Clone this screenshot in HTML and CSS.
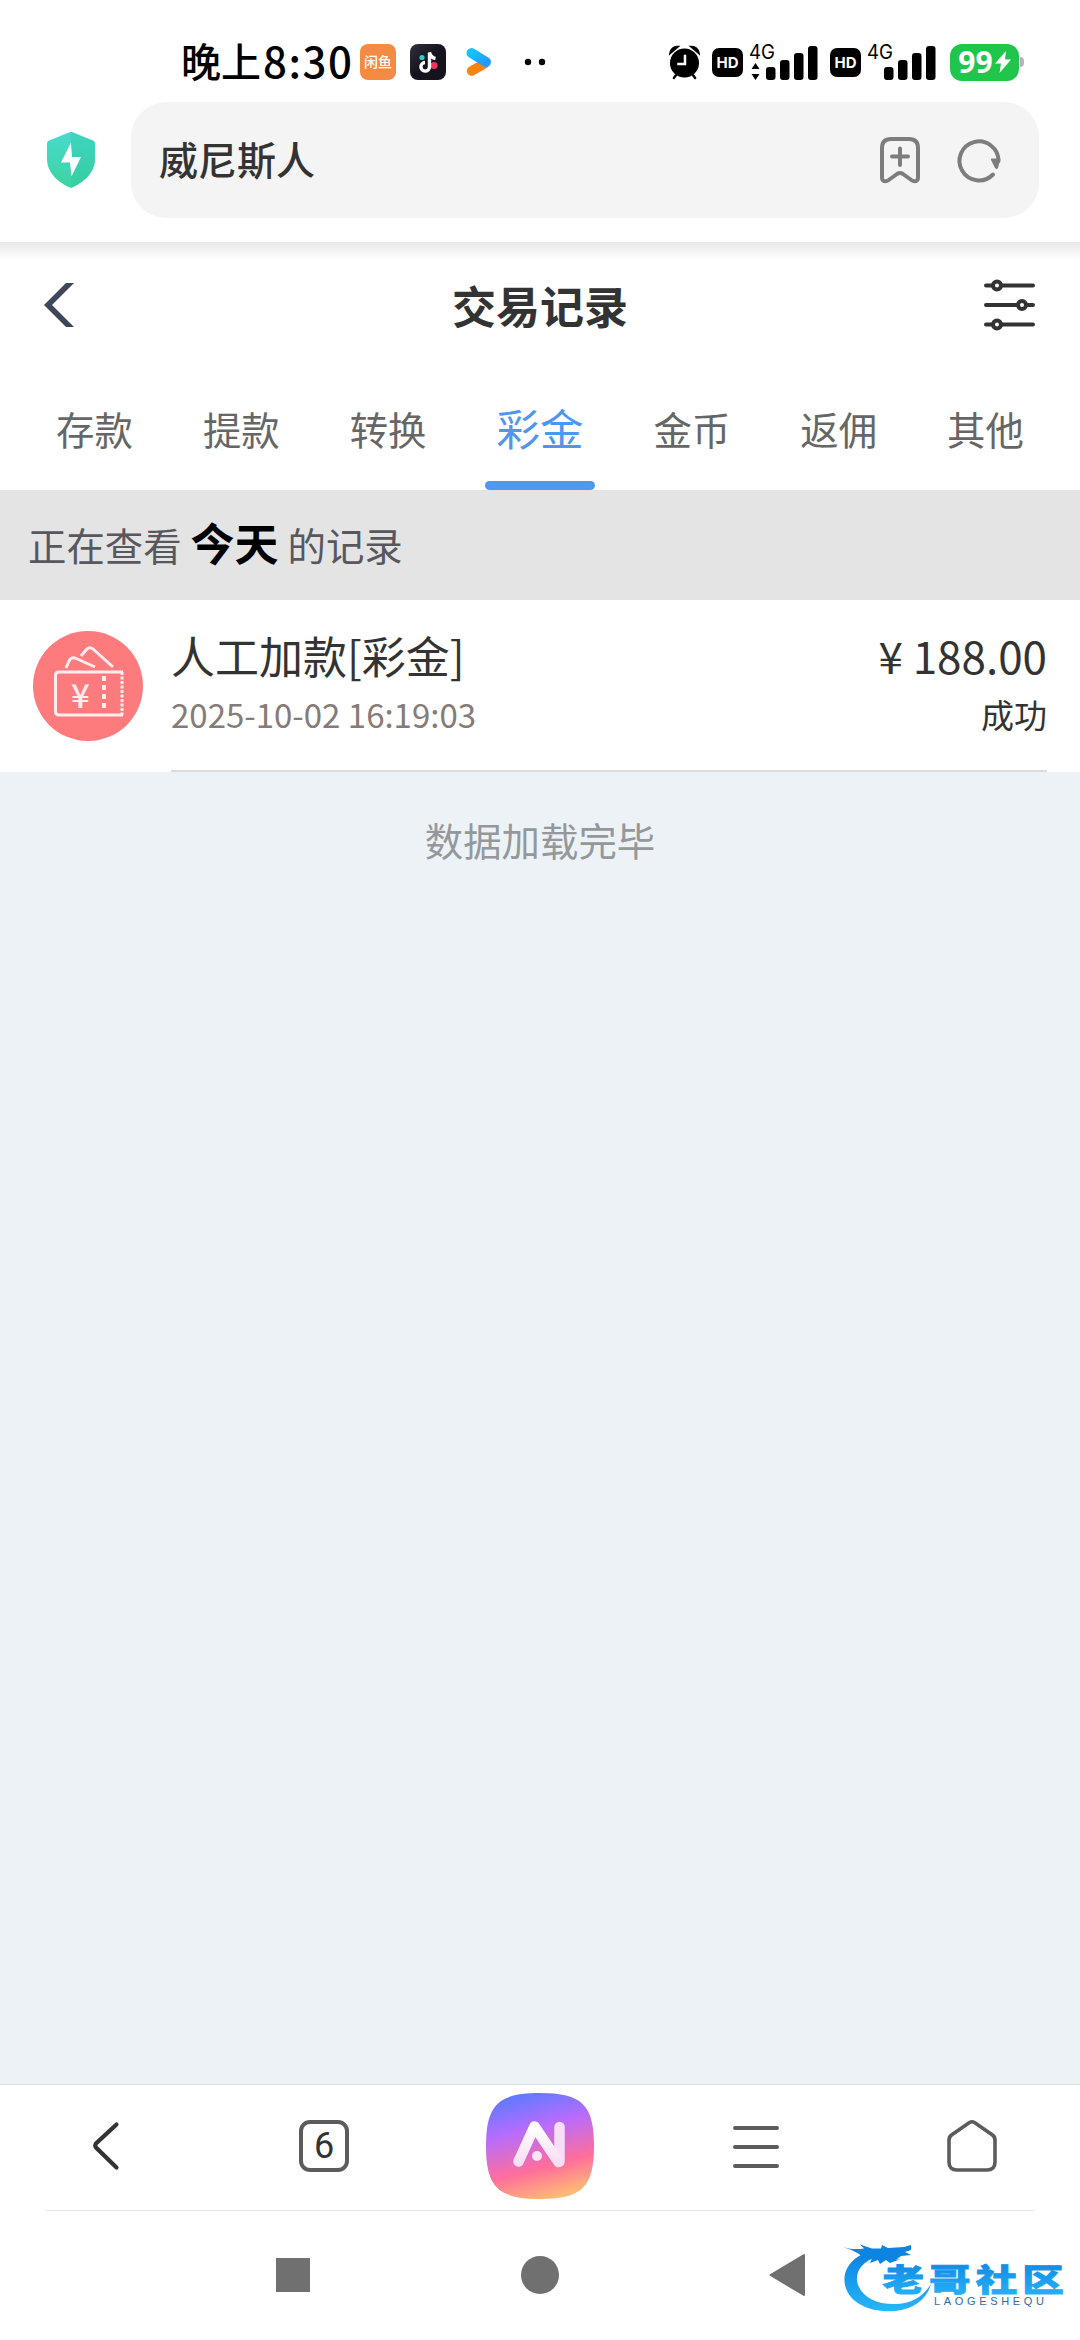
FILE: index.html
```html
<!DOCTYPE html>
<html lang="zh-CN">
<head>
<meta charset="utf-8">
<title>交易记录</title>
<link rel="stylesheet" href="styles.css">
</head>
<body>
<header class="browser">
  <div class="status">
    <span class="clock">晚上<span class="clock-digits">8:30</span></span>
    <span class="app app-fish">闲鱼</span>
    <svg class="app app-note" viewBox="0 0 36 36">
      <defs><linearGradient id="dark" x1="0" y1="0" x2="1" y2="1"><stop offset="0" stop-color="#332e3c"/><stop offset=".5" stop-color="#15131d"/><stop offset="1" stop-color="#15131d"/></linearGradient></defs>
      <rect width="36" height="36" rx="8" fill="url(#dark)"/>
      <circle cx="12" cy="13.500" r="2.600" fill="#2bd0c4"/><circle cx="24" cy="21.500" r="3.600" fill="#f2345c"/>
      <path d="M15 18.500a4.300 4.300 0 1 0 4.500 4.500V8.500c1 3.500 3 5.500 6 6" fill="none" stroke="#fff" stroke-width="3.400"/>
    </svg>
    <svg class="app-arrow" viewBox="0 0 26 30">
      <defs><linearGradient id="sky" x1="0" y1="0" x2="1" y2="1"><stop offset="0" stop-color="#13c4fb"/><stop offset="1" stop-color="#229bff"/></linearGradient></defs>
      <path d="M5.500 24L18 17" stroke="#fb8410" stroke-width="9.500" stroke-linecap="round"/>
      <path d="M5.500 6L20 15" stroke="url(#sky)" stroke-width="10" stroke-linecap="round"/>
    </svg>
    <svg class="more" viewBox="0 0 22 8"><circle cx="4" cy="4" r="3.200"/><circle cx="18" cy="4" r="3.200"/></svg>
    <svg class="alarm" viewBox="0 0 32 36">
      <path d="M1.500 8a7 7 0 0 1 7-6zM30.500 8a7 7 0 0 0-7-6zM8 30l-3 4M24 30l3 4" stroke="#000" stroke-width="2.500" stroke-linecap="round"/>
      <circle cx="16" cy="18.500" r="15"/>
      <path d="M16.500 10v9.500H8.500" fill="none" stroke="#fff" stroke-width="2.600"/>
    </svg>
    <span class="hd">HD</span>
    <svg class="signal" viewBox="0 0 70 38">
      <text class="net" x="0" y="15.500" textLength="26" lengthAdjust="spacingAndGlyphs">4G</text>
      <path d="M6.500 20l4 6h-8zM6.500 37l4-6h-8z"/>
      <rect x="17" y="24" width="9.500" height="13" rx="3"/><rect x="31" y="17" width="9.500" height="20" rx="3"/><rect x="45" y="10" width="9.500" height="27" rx="3"/><rect x="59" y="3" width="9.500" height="34" rx="3"/>
    </svg>
    <span class="hd hd-second">HD</span>
    <svg class="signal" viewBox="0 0 70 38">
      <text class="net" x="0" y="15.500" textLength="26" lengthAdjust="spacingAndGlyphs">4G</text>
      <rect x="17" y="24" width="9.500" height="13" rx="3"/><rect x="31" y="17" width="9.500" height="20" rx="3"/><rect x="45" y="10" width="9.500" height="27" rx="3"/><rect x="59" y="3" width="9.500" height="34" rx="3"/>
    </svg>
    <span class="battery">99<svg viewBox="0 0 16 22"><path d="M11 0L0 12.500h6L4.500 22 16 8.500h-6z" fill="#fff"/></svg></span>
    <i class="nub"></i>
  </div>
  <div class="address">
    <svg class="shield" viewBox="0 0 48 56">
      <defs><linearGradient id="mint" x1="0" y1="0" x2="0" y2="1"><stop offset="0" stop-color="#48dacd"/><stop offset="1" stop-color="#3dd39f"/></linearGradient></defs>
      <path d="M24 0c2 0 3 1 22 8.500q2 .800 2 3V27c0 14-12 24-24 29C12 51 0 41 0 27V11.500q0-2.200 2-3C21 1 22 0 24 0z" fill="url(#mint)"/>
      <path d="M24 0c2 0 3 1 22 8.500q2 .800 2 3V27c0 14-12 24-24 29z" fill="#1fc3a0" opacity=".25"/>
      <path d="M24 10.500L14 30.500h9L24.500 44.500 34 25H25z" fill="#fff"/>
    </svg>
    <div class="field">
      <span class="site">威尼斯人</span>
      <svg class="mark" viewBox="0 0 40 46" fill="none" stroke="#7d7d7d" stroke-width="4" stroke-linecap="round" stroke-linejoin="round"><path d="M2 11q0-9 9-9h18q9 0 9 9v29q0 6-6 3.500L23 37q-3-1.800-6 0L8 43.500Q2 46 2 40zM20 11.500v16.500M12 19.500h16"/></svg>
      <svg class="reload" viewBox="0 0 44 44"><path d="M35 36.500A19.500 19.500 0 1 1 40.500 23" fill="none" stroke="#7d7d7d" stroke-width="4" stroke-linecap="round"/><path d="M33.500 20.500H42.500L40 30q-1 2-3 0l-4-8q-.500-1.500.500-1.500z" fill="#7d7d7d"/></svg>
    </div>
  </div>
</header>
<main class="page">
  <div class="titlebar">
    <svg class="back" viewBox="0 0 30 44"><path d="M22 0h8L8 22l22 22h-8L0 22z" fill="#3c485a"/></svg>
    <h1>交易记录</h1>
    <svg class="filter" viewBox="0 0 52 52" stroke="#333" stroke-width="4" stroke-linecap="round" fill="#fff"><path d="M3 6.500h47M3 26h47M3 45.500h47"/><circle cx="14" cy="6.500" r="4"/><circle cx="39" cy="26" r="4"/><circle cx="14" cy="45.500" r="4"/></svg>
  </div>
  <nav class="tabs">
    <a>存款</a><a>提款</a><a>转换</a><a class="active">彩金</a><a>金币</a><a>返佣</a><a>其他</a>
  </nav>
  <div class="range"><span>正在查看</span><b>今天</b><span>的记录</span></div>
  <article class="record">
    <svg class="ticket" viewBox="0 0 110 110">
      <circle cx="55" cy="55" r="55" fill="#fd7b7d"/>
      <g fill="none" stroke="#ffeded" stroke-width="3" stroke-linejoin="round">
        <path d="M90 41H26q-3.500 0-3.500 3.500v36q0 3.500 3.500 3.500h64"/>
        <path d="M89 41v43" stroke-dasharray="3 1.500"/>
        <path d="M33 37l3-7q2-4 6-3l20 9M48 25l5-6q3-4 7-1l20 18"/>
        <path d="M71 45v33" stroke-width="4" stroke-dasharray="5 4"/>
      </g>
      <text x="47.500" y="76.500" text-anchor="middle" class="yuan">¥</text>
    </svg>
    <div class="detail">
      <div class="line"><strong>人工加款[彩金]</strong><strong>¥ 188.00</strong></div>
      <div class="line small"><time>2025-10-02 16:19:03</time><span>成功</span></div>
    </div>
  </article>
  <p class="done">数据加载完毕</p>
</main>
<footer>
  <div class="toolbar">
    <svg width="50" height="52" viewBox="0 0 50 52"><path d="M34 5L13.500 24q-1.500 2 0 4L34 48" transform="translate(-.500 -.500)" fill="none" stroke="#333" stroke-width="4.200" stroke-linecap="round"/></svg>
    <span class="count">6</span>
    <svg width="108" height="106" viewBox="0 0 108 106">
      <defs>
        <linearGradient id="sunset" x1=".35" y1="0" x2=".62" y2="1"><stop offset="0" stop-color="#5f7aff"/><stop offset=".32" stop-color="#b66cff"/><stop offset=".7" stop-color="#ff6e9b"/><stop offset="1" stop-color="#ffbd73"/></linearGradient>
        <linearGradient id="frost" x1="0" y1="0" x2="0" y2="1"><stop offset="0" stop-color="#fff"/><stop offset="1" stop-color="#f7dff3"/></linearGradient>
      </defs>
      <path d="M54 0c42 0 54 12 54 53s-12 53-54 53S0 94 0 53 12 0 54 0z" fill="url(#sunset)"/>
      <g fill="none" stroke-width="10.500" stroke-linecap="round" stroke-linejoin="round"><path d="M73.500 34v34.500" stroke="#f6dff8"/><path d="M32.500 68.500L48.500 33.500 72.500 69" stroke="url(#frost)"/></g>
      <circle cx="51" cy="63" r="5" fill="#fbe4f3"/>
    </svg>
    <svg width="50" height="52" viewBox="0 0 50 52"><path d="M4 8h42M4 27h42M4 46h42" stroke="#5c5c5c" stroke-width="4" stroke-linecap="round"/></svg>
    <svg width="50" height="52" viewBox="0 0 50 52"><path d="M22.500 2.500q2.500-1.500 5 0L45.500 15q2.500 2 2.500 5v22q0 8-8 8H10q-8 0-8-8V20q0-3 2.500-5z" fill="none" stroke="#5c5c5c" stroke-width="3.600"/></svg>
  </div>
  <div class="system">
    <svg class="recent" viewBox="0 0 34 34"><path d="M0 0h34v34H0z"/></svg>
    <svg class="home" viewBox="0 0 38 38"><circle cx="19" cy="19" r="19"/></svg>
    <svg class="return" viewBox="0 0 36 42"><path d="M35 1v40L1.500 21z" stroke="#707070" stroke-width="2" stroke-linejoin="round"/></svg>
    <svg class="brand" viewBox="0 0 224 72">
      <defs><linearGradient id="blue" x1="0" y1="0" x2="0" y2="1"><stop offset="0" stop-color="#0c80e0"/><stop offset="1" stop-color="#27b6fa"/></linearGradient></defs>
      <path d="M30 9C9 14 0 29 3 43c4 19 27 28 50 26 19-2 32-12 36-27-8 13-19 19-34 20-20 1-37-7-40-23-1-11 6-19 17-23z" fill="url(#blue)"/>
      <path d="M1 5c8 2.500 15 2.500 21 1.500l-4-4 12 4h9l1-3.500 6 3 16-1 7-2v5l-6 2 6 3-10 1-5 4 5-1-11 4-4-3-6 4-2-4-8 3 2-5-8 1c-4-6-12-9-21-12z" fill="#0d83e2"/>
      <text class="brand-cn" x="0" y="0" transform="translate(40.500 48.500) scale(1.340 1)" fill="url(#blue)" stroke="url(#blue)">老哥社区</text>
      <text class="brand-en" x="92" y="63" textLength="110">LAOGESHEQU</text>
    </svg>
  </div>
</footer>
</body>
</html>
```
FILE: styles.css
```css
* { box-sizing: border-box; }
body {
  margin: 0;
  width: 1080px;
  height: 2340px;
  display: flex;
  flex-direction: column;
  overflow: hidden;
  background: #fff;
  color: #333;
  font-family: "Noto Sans CJK SC", sans-serif;
}
svg { display: block; flex: none; overflow: visible; }
.browser { height: 242px; flex: none; }
.status { height: 102px; padding: 22px 0 0 181px; display: flex; align-items: center; }
.clock {
  width: 173px;
  display: flex;
  align-items: center;
  font-size: 40px;
  font-weight: 500;
  line-height: 76px;
  color: #000;
  white-space: nowrap;
  margin-top: -5px;
}
.clock-digits { font-size: 42px; letter-spacing: 1.5px; margin-left: 2px; }
.app { width: 36px; height: 36px; flex: none; margin-left: 6px; }
.app-fish { border-radius: 8px; background: #f58a43; color: #fff; font-size: 14px; font-weight: 500; line-height: 35px; text-align: center; }
.app-note { margin-left: 14px; }
.app-arrow { width: 26px; height: 30px; margin-left: 20px; }
.more { width: 22px; height: 8px; margin-left: 32px; }
.alarm { width: 31px; height: 35px; margin-left: 123px; }
.hd { width: 31px; height: 29px; margin-left: 12px; border-radius: 7px; background: #000; color: #fff; font: 700 15px/29px Inter, sans-serif; text-align: center; flex: none; }
.hd-second { margin-left: 11px; }
.signal { width: 70px; height: 38px; margin-left: 6px; }
.net { font: 400 20px Inter, sans-serif; }
.battery { width: 69px; height: 37px; flex: none; margin-left: 13px; border-radius: 12px; background: #20c64c; color: #fff; font: 700 30px/36px "Open Sans", sans-serif; display: flex; align-items: center; justify-content: center; }
.battery svg { width: 16px; height: 22px; margin-left: 2px; }
.nub { width: 4px; height: 10px; margin-left: 1px; border-radius: 0 5px 5px 0; background: #b5b5b5; }
.address { display: flex; align-items: center; padding: 0 41px 0 47px; height: 116px; }
.shield { width: 48px; height: 56px; }
.field { height: 116px; flex: 1; margin-left: 36px; padding: 0 37px 0 28px; display: flex; align-items: center; border-radius: 35px; background: #f4f4f4; }
.site { flex: 1; font-size: 39px; font-weight: 500; line-height: 110px; margin-top: -5px; }
.mark { width: 40px; height: 46px; }
.reload { width: 44px; height: 44px; margin-left: 38px; }

.page { flex: 1; display: flex; flex-direction: column; background: #edf2f6; }
.titlebar { height: 129px; padding: 0 45px 3px 44px; display: flex; align-items: center; justify-content: space-between; background: linear-gradient(#e8e8e8, #fff 18px); }
.back { width: 30px; height: 44px; }
h1 { margin: 0 0 0 23px; font-size: 44px; font-weight: 700; line-height: 64px; }
.filter { width: 52px; height: 52px; }
.tabs { height: 119px; display: flex; justify-content: center; background: #fff; }
.tabs a { position: relative; padding: 0 35px; font-size: 38.400px; line-height: 114px; color: #666; }
.tabs .active { font-size: 43.500px; color: #5096ee; }
.active::after { content: ""; position: absolute; left: 50%; bottom: 0; width: 110px; height: 9px; margin-left: -55px; border-radius: 5px; background: #5096f3; }
.range { height: 110px; padding-left: 28px; display: flex; align-items: baseline; gap: 9px; line-height: 104px; background: #e4e4e5; font-size: 38.400px; color: #58575d; }
.range b { font-size: 44px; color: #000; }
.record { height: 172px; padding: 0 33px; display: flex; background: #fff; }
.ticket { width: 110px; height: 110px; margin-top: 31px; }
.yuan { font: 500 33px "Noto Sans CJK SC", sans-serif; fill: #ffeded; }
.detail { flex: 1; margin-left: 28px; padding-top: 23px; border-bottom: 2px solid #dcdde0; }
.line { display: flex; justify-content: space-between; line-height: 64px; }
.line strong { font-size: 44px; font-weight: 400; }
.small { font-size: 33px; line-height: 55px; }
.small time { color: #857b79; }
.done { margin: 0; padding-top: 35px; font-size: 38.400px; line-height: 64px; text-align: center; color: #95989b; }

footer { flex: none; height: 256px; border-top: 1px solid #d9dfe4; background: #fff; }
.toolbar { height: 125px; display: grid; grid-template-columns: repeat(5, 216px); place-items: center; padding-bottom: 4px; }
.count { width: 50px; height: 52px; border: 4px solid #5c5c5c; border-radius: 11px; text-align: center; font: 400 36px/44px Roboto, sans-serif; color: #333; }
.system { height: 130px; margin: 0 46px; border-top: 1px solid #e4e4e4; display: flex; align-items: center; padding: 0 0 1px 230px; fill: #707070; }
.recent { width: 34px; height: 34px; }
.home { width: 38px; height: 38px; margin-left: 211px; }
.return { width: 36px; height: 42px; margin-left: 210px; }
.brand { width: 224px; height: 72px; margin: 6px 0 0 37px; }
.brand-cn { font: 900 31px "Noto Sans CJK SC", sans-serif; letter-spacing: 3.800px; stroke-width: .800px; }
.brand-en { font: 400 11px "Liberation Sans", sans-serif; fill: #2c6cab; }
```
